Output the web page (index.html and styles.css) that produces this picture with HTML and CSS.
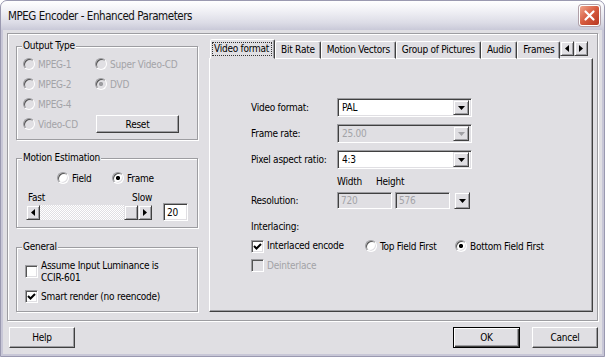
FILE: index.html
```html
<!DOCTYPE html>
<html lang="en">
<head>
  <meta charset="UTF-8" />
  <title>MPEG Encoder - Enhanced Parameters</title>
  <link rel="stylesheet" href="styles.css">
</head>
<body>
  <div class="window">
    <div class="title-bar">
      <span class="title">MPEG Encoder - Enhanced Parameters</span>
      <div class="close-btn">
        <svg width="13" height="13" viewBox="0 0 13 13"><path d="M2.5 2.5 L10.5 10.5 M10.5 2.5 L2.5 10.5" stroke="#fff" stroke-width="2.2" stroke-linecap="round"/></svg>
      </div>
    </div>

    <div class="client">
      <div class="panel">
        <!-- columna izquierda -->
        <div class="left-col">
          <div class="group output-group">
            <span class="group-title">Output Type</span>
            <div class="output-grid">
              <div class="opt disabled"><span class="radio"></span>MPEG-1</div>
              <div class="opt disabled"><span class="radio"></span>Super Video-CD</div>
              <div class="opt disabled"><span class="radio"></span>MPEG-2</div>
              <div class="opt disabled"><span class="radio checked"></span>DVD</div>
              <div class="opt disabled"><span class="radio"></span>MPEG-4</div>
              <div></div>
              <div class="opt disabled"><span class="radio"></span>Video-CD</div>
              <div><button class="btn reset-btn">Reset</button></div>
            </div>
          </div>

          <div class="group motion-group">
            <span class="group-title">Motion Estimation</span>
            <div class="field-row">
              <div class="opt"><span class="radio"></span>Field</div>
              <div class="opt"><span class="radio checked"></span>Frame</div>
            </div>
            <div class="speed-labels"><span>Fast</span><span>Slow</span></div>
            <div class="speed-row">
              <div class="hscroll">
                <span class="sb-btn"><svg width="4" height="7" viewBox="0 0 4 7"><polygon points="4,0 0,3.5 4,7" fill="#000"/></svg></span>
                <span class="sb-track"></span>
                <span class="sb-btn"></span>
                <span class="sb-btn"><svg width="4" height="7" viewBox="0 0 4 7"><polygon points="0,0 4,3.5 0,7" fill="#000"/></svg></span>
              </div>
              <div class="edit small-edit">20</div>
            </div>
          </div>

          <div class="group general-group">
            <span class="group-title">General</span>
            <div class="check-opt">
              <span class="checkbox"></span>
              <span>Assume Input Luminance is<br>CCIR-601</span>
            </div>
            <div class="check-opt second">
              <span class="checkbox"><svg width="9" height="9" viewBox="0 0 9 9"><path d="M1 4 L3.5 6.5 L8 2" stroke="#000" stroke-width="2" fill="none"/></svg></span>
              <span>Smart render (no reencode)</span>
            </div>
          </div>
        </div>

        <!-- pestañas -->
        <div class="tab-area">
          <div class="tab-strip">
            <div class="tab-list">
              <div class="tab active"><span class="focus">Video format</span></div>
              <div class="tab">Bit Rate</div>
              <div class="tab">Motion Vectors</div>
              <div class="tab">Group of Pictures</div>
              <div class="tab">Audio</div>
              <div class="tab">Frames</div>
            </div>
            <span class="sb-btn tab-arrow"><svg width="4" height="7" viewBox="0 0 4 7"><polygon points="4,0 0,3.5 4,7" fill="#000"/></svg></span>
            <span class="sb-btn tab-arrow"><svg width="4" height="7" viewBox="0 0 4 7"><polygon points="0,0 4,3.5 0,7" fill="#000"/></svg></span>
          </div>

          <div class="tab-page">
            <div class="form-row">
              <span class="form-label">Video format:</span>
              <div class="combo">
                <span class="combo-value">PAL</span>
                <span class="drop-btn"><svg width="7" height="4" viewBox="0 0 7 4"><polygon points="0,0 7,0 3.5,4" fill="#000"/></svg></span>
              </div>
            </div>
            <div class="form-row">
              <span class="form-label">Frame rate:</span>
              <div class="combo disabled">
                <span class="combo-value">25.00</span>
                <span class="drop-btn"><svg width="7" height="4" viewBox="0 0 7 4"><polygon points="0,0 7,0 3.5,4" fill="#a0a0a4"/></svg></span>
              </div>
            </div>
            <div class="form-row">
              <span class="form-label">Pixel aspect ratio:</span>
              <div class="combo">
                <span class="combo-value">4:3</span>
                <span class="drop-btn"><svg width="7" height="4" viewBox="0 0 7 4"><polygon points="0,0 7,0 3.5,4" fill="#000"/></svg></span>
              </div>
            </div>

            <div class="dims-head"><span class="dim-w">Width</span><span>Height</span></div>
            <div class="res-row">
              <span class="form-label">Resolution:</span>
              <div class="edit dim-edit disabled">720</div>
              <div class="edit dim-edit disabled">576</div>
              <span class="drop-btn res-btn"><svg width="7" height="4" viewBox="0 0 7 4"><polygon points="0,0 7,0 3.5,4" fill="#000"/></svg></span>
            </div>

            <div class="section-label">Interlacing:</div>
            <div class="interlace-row">
              <div class="check-opt">
                <span class="checkbox"><svg width="9" height="9" viewBox="0 0 9 9"><path d="M1 4 L3.5 6.5 L8 2" stroke="#000" stroke-width="2" fill="none"/></svg></span>
                <span>Interlaced encode</span>
              </div>
              <div class="opt"><span class="radio"></span>Top Field First</div>
              <div class="opt"><span class="radio checked"></span>Bottom Field First</div>
            </div>
            <div class="check-opt deint disabled">
              <span class="checkbox"></span>
              <span>Deinterlace</span>
            </div>
          </div>
        </div>
      </div>

      <div class="button-row">
        <button class="btn help-btn">Help</button>
        <button class="btn default">OK</button>
        <button class="btn">Cancel</button>
      </div>
    </div>
  </div>
</body>
</html>
```

FILE: styles.css
```css
* {
  box-sizing: border-box;
}

body {
  margin: 0;
  background: #fff;
  font-family: "DejaVu Sans Condensed", "DejaVu Sans", sans-serif;
  font-stretch: condensed;
  font-size: 10px;
  letter-spacing: -0.25px;
  color: #000;
}

.window {
  width: 605px;
  height: 357px;
  display: flex;
  flex-direction: column;
  background: #c8c7d7;
  border: 1px solid #9a99b0;
  border-radius: 7px 7px 0 0;
  overflow: hidden;
}

.title-bar {
  flex: 0 0 29px;
  display: flex;
  align-items: center;
  justify-content: space-between;
  padding: 0 4px 0 7px;
  background: linear-gradient(#ffffff, #f0f0f5 35%, #dcdce6 75%, #c9c9d8);
}

.title {
  font-size: 11.5px;
  color: #111;
  letter-spacing: -0.45px;
}

.close-btn {
  width: 21px;
  height: 21px;
  display: flex;
  align-items: center;
  justify-content: center;
  border: 1px solid #fff;
  border-radius: 3px;
  background: linear-gradient(135deg, #f0a48a, #d65a3e 50%, #b73722);
  box-shadow: 0 0 0 1px #b0a0a8;
}

.client {
  flex: 1;
  margin: 0 2px 2px;
  background: #e0dfe3;
  display: flex;
  flex-direction: column;
}

/* cajas grabadas */
.panel,
.group {
  border: 1px solid #9d9da1;
  box-shadow: inset 1px 1px #fff, 1px 1px #fff;
}

.panel {
  height: 288px;
  margin: 3px 4px 0;
  display: flex;
  padding: 0 4px 0 8px;
}

.left-col {
  width: 182px;
  padding-top: 12px;
  display: flex;
  flex-direction: column;
}

.group {
  position: relative;
}

.group-title {
  position: absolute;
  top: -7px;
  left: 5px;
  padding: 0 1px;
  line-height: 12px;
  background: #e0dfe3;
}

.output-group {
  height: 94px;
}

.output-grid {
  display: grid;
  grid-template-columns: 72px auto;
  grid-auto-rows: 20px;
  align-items: center;
  padding: 7px 0 0 6px;
}

.motion-group {
  height: 70px;
  margin-top: 18px;
  padding: 12px 0 0 9px;
}

.general-group {
  height: 65px;
  margin-top: 19px;
  padding: 12px 0 0 8px;
}

.opt {
  display: flex;
  align-items: center;
  gap: 3px;
  white-space: nowrap;
}

.disabled {
  color: #a3a3a7;
}

.radio {
  width: 12px;
  height: 12px;
  flex: 0 0 12px;
  border-radius: 50%;
  border: 1px solid;
  border-color: #9d9da1 #fff #fff #9d9da1;
  box-shadow: inset 1px 1px #555, inset -1px -1px #e0dfe3;
  background: #fff;
}

.radio.checked {
  background: radial-gradient(circle, #000 1.8px, #fff 2.4px);
}

.disabled .radio {
  background: #e0dfe3;
}

.disabled .radio.checked {
  background: radial-gradient(circle, #9d9da1 1.8px, #e0dfe3 2.4px);
}

.checkbox {
  width: 13px;
  height: 13px;
  flex: 0 0 13px;
  display: flex;
  align-items: center;
  justify-content: center;
  border: 1px solid;
  border-color: #9d9da1 #fff #fff #9d9da1;
  box-shadow: inset 1px 1px #555, inset -1px -1px #e0dfe3;
  background: #fff;
}

.disabled .checkbox {
  background: #e0dfe3;
}

.check-opt {
  display: flex;
  align-items: flex-start;
  gap: 3px;
  line-height: 12px;
  white-space: nowrap;
}

.general-group .check-opt .checkbox {
  margin-top: 5px;
}

.general-group .check-opt.second {
  margin-top: 6px;
  align-items: center;
}

.general-group .check-opt.second .checkbox {
  margin-top: 0;
}

.btn {
  font: inherit;
  font-stretch: condensed;
  letter-spacing: -0.25px;
  color: #000;
  height: 21px;
  padding: 0;
  background: #e0dfe3;
  border: 1px solid;
  border-color: #fff #404040 #404040 #fff;
  box-shadow: inset -1px -1px #9d9da1;
}

.reset-btn {
  width: 83px;
  height: 18px;
  margin-left: 1px;
}

/* estimación de movimiento */
.field-row {
  display: grid;
  grid-template-columns: 55px auto;
  height: 14px;
  padding-left: 31px;
}

.speed-labels {
  width: 126px;
  display: flex;
  justify-content: space-between;
  padding-left: 2px;
  margin-top: 7px;
  line-height: 12px;
}

.speed-row {
  display: flex;
  align-items: center;
  margin-top: -1px;
  height: 18px;
}

.hscroll {
  width: 126px;
  height: 15px;
  display: flex;
}

.sb-btn {
  width: 14px;
  height: 15px;
  flex: 0 0 14px;
  display: flex;
  align-items: center;
  justify-content: center;
  background: #e0dfe3;
  border: 1px solid;
  border-color: #e0dfe3 #404040 #404040 #e0dfe3;
  box-shadow: inset 1px 1px #fff, inset -1px -1px #9d9da1;
}

.sb-track {
  flex: 1;
  background: repeating-conic-gradient(#fff 0 25%, #e0dfe3 0 50%) 0 0 / 2px 2px;
}

.edit {
  display: flex;
  align-items: center;
  padding-left: 3px;
  background: #fff;
  border: 1px solid;
  border-color: #9d9da1 #fff #fff #9d9da1;
  box-shadow: inset 1px 1px #404040, inset -1px -1px #e0dfe3;
}

.small-edit {
  width: 25px;
  height: 18px;
  margin-left: 11px;
}

.edit.disabled {
  background: #e0dfe3;
}

/* pestañas */
.tab-area {
  width: 384px;
  margin-left: 11px;
  padding-top: 5px;
  display: flex;
  flex-direction: column;
}

.tab-strip {
  display: flex;
  height: 20px;
  margin-bottom: -1px;
  padding-left: 1px;
  position: relative;
  z-index: 1;
}

.tab-list {
  width: 350px;
  height: 20px;
  display: flex;
  align-items: flex-end;
  overflow: hidden;
}

.tab {
  height: 18px;
  padding: 0 5px;
  line-height: 15px;
  white-space: nowrap;
  border: 1px solid;
  border-color: #fff #404040 #fff #fff;
  border-radius: 2px 2px 0 0;
  box-shadow: inset -1px 0 #9d9da1;
}

.tab.active {
  height: 20px;
  padding: 2px 2px 0 1px;
  border-bottom-color: transparent;
  background: #e0dfe3;
}

.focus {
  display: block;
  border: 1px dotted #333;
  line-height: 12px;
  padding: 0 2px 0 1px;
}

.tab-arrow {
  margin-top: 2px;
}

.tab-page {
  height: 254px;
  border: 1px solid;
  border-color: #fff #404040 #404040 #fff;
  box-shadow: inset -1px -1px #9d9da1;
  padding: 39px 0 0 41px;
}

.form-row {
  display: flex;
  align-items: center;
  height: 19px;
  margin-bottom: 7px;
}

.form-label {
  width: 86px;
  flex: 0 0 86px;
  white-space: nowrap;
}

.combo {
  width: 135px;
  height: 19px;
  display: flex;
  align-items: center;
  padding: 2px;
  background: #fff;
  border: 1px solid;
  border-color: #9d9da1 #fff #fff #9d9da1;
  box-shadow: inset 1px 1px #404040, inset -1px -1px #e0dfe3;
}

.combo.disabled {
  background: #e0dfe3;
}

.combo-value {
  flex: 1;
  padding-left: 2px;
}

.drop-btn {
  width: 16px;
  height: 15px;
  display: flex;
  align-items: center;
  justify-content: center;
  background: #e0dfe3;
  border: 1px solid;
  border-color: #e0dfe3 #404040 #404040 #e0dfe3;
  box-shadow: inset 1px 1px #fff, inset -1px -1px #9d9da1;
}

.dims-head {
  display: flex;
  padding-left: 86px;
  line-height: 12px;
}

.dim-w {
  width: 39px;
}

.res-row {
  display: flex;
  align-items: center;
  height: 17px;
  margin-top: 4px;
  gap: 3px;
}

.res-row .form-label {
  width: 83px;
  flex-basis: 83px;
}

.dim-edit {
  width: 55px;
  height: 17px;
}

.res-btn {
  width: 16px;
  height: 17px;
  margin-left: 1px;
}

.section-label {
  margin-top: 12px;
  line-height: 12px;
}

.interlace-row {
  display: grid;
  grid-template-columns: 114px 90px auto;
  align-items: center;
  height: 14px;
  margin-top: 6px;
}

.interlace-row .check-opt {
  align-items: center;
}

.deint {
  align-items: center;
  margin-top: 6px;
}

/* botones inferiores */
.button-row {
  display: flex;
  gap: 12px;
  height: 21px;
  margin-top: 6px;
  padding: 0 4px 0 6px;
}

.button-row .btn {
  width: 66px;
}

.help-btn {
  margin-right: auto;
}

.button-row .btn.default {
  width: 67px;
  border-color: #000;
  box-shadow: inset 1px 1px #fff, inset -1px -1px #404040, inset -2px -2px #9d9da1;
}
```
